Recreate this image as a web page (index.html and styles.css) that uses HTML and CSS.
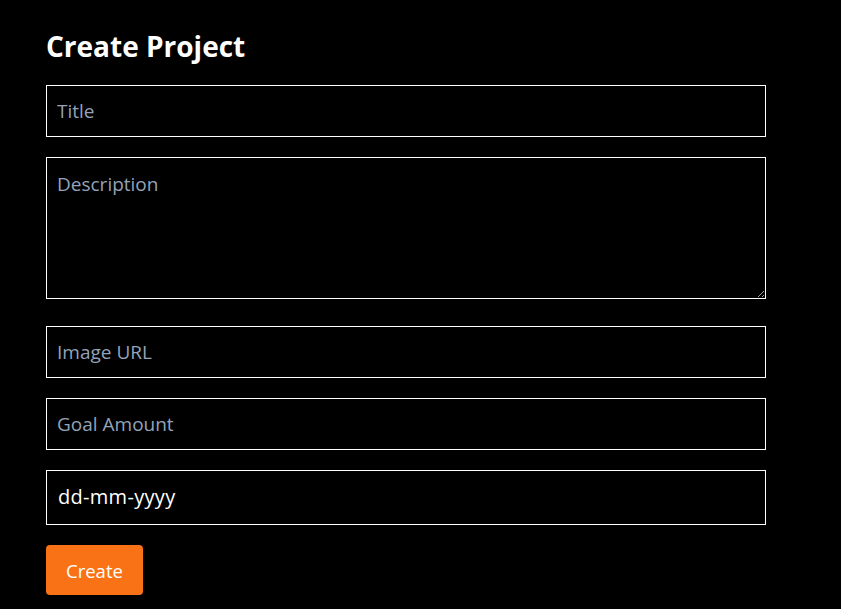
FILE: index.html
```html
<!DOCTYPE html>
<html>
<head>
<meta charset="utf-8">
<link rel="stylesheet" href="styles.css">
</head>
<body>
<main class="container">
  <h2 class="title">Create Project</h2>
  <form class="form">
    <input class="field" type="text" placeholder="Title">
    <textarea class="field area" placeholder="Description"></textarea>
    <input class="field" type="text" placeholder="Image URL">
    <input class="field" type="text" placeholder="Goal Amount">
    <div class="field date">dd-mm-yyyy</div>
    <div class="actions"><button class="btn" type="button">Create</button></div>
  </form>
</main>
</body>
</html>
```

FILE: styles.css
```css
html, body {
  margin: 0;
  background: #000;
  color: #fff;
  font-family: "Open Sans", "Noto Sans", sans-serif;
}
.container {
  width: 720px;
  padding: 28px 0 0 46px;
}
.title {
  margin: 0 0 21px;
  font-size: 28px;
  line-height: 36px;
  font-weight: 700;
  letter-spacing: 0;
}
.form {
  display: flex;
  flex-direction: column;
  gap: 20px;
}
.field {
  box-sizing: border-box;
  width: 720px;
  height: 52px;
  margin: 0;
  padding: 0 10px;
  background: #000;
  color: #fff;
  border: 1px solid #fff;
  border-radius: 0;
  font-family: inherit;
  font-size: 19px;
  outline: none;
}
.field::placeholder {
  color: #94a3b8;
  opacity: 1;
}
.area {
  height: 142px;
  padding-top: 13px;
  resize: vertical;
  margin-bottom: 7px;
}
.date {
  height: 55px;
  display: flex;
  align-items: center;
  padding-left: 11px;
  padding-bottom: 2px;
  font-size: 20px;
  letter-spacing: 0.3px;
}
.actions {
  display: flex;
}
.btn {
  height: 50px;
  padding: 0 20px;
  background: #f97316;
  color: #fff;
  border: none;
  border-radius: 4px;
  font-family: inherit;
  font-size: 18.5px;
}
```
